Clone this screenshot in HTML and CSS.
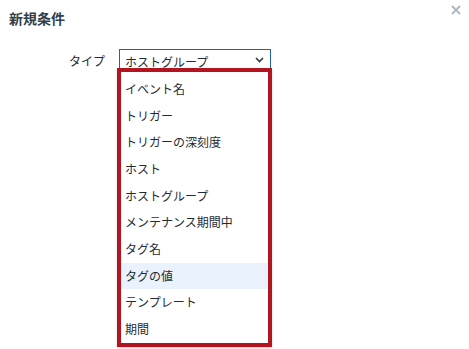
FILE: index.html
```html
<!doctype html>
<html>
	<head>
		<meta charset="utf-8" />
		<title>新規条件</title>
		<link rel="stylesheet" href="styles.css">
	</head>
	<body>
		<div class="dialog">
			<div class="dialog-head">
				<h4 class="dialog-title">新規条件</h4>
				<button class="dialog-close" title="閉じる">
					<svg width="10" height="10" viewBox="0 0 10 10"><path d="M1 1 L9 9 M9 1 L1 9" stroke="#aab7c1" stroke-width="1.8" fill="none"/></svg>
				</button>
			</div>
			<div class="form-row">
				<label class="form-label">タイプ</label>
				<div class="select-wrap">
					<div class="select">
						<span>ホストグループ</span>
						<svg class="chevron" width="9" height="6" viewBox="0 0 9 6"><path d="M1 1 L4.5 4.5 L8 1" stroke="#2f3a42" stroke-width="1.6" fill="none"/></svg>
					</div>
					<ul class="listbox">
						<li>イベント名</li>
						<li>トリガー</li>
						<li>トリガーの深刻度</li>
						<li>ホスト</li>
						<li>ホストグループ</li>
						<li>メンテナンス期間中</li>
						<li>タグ名</li>
						<li class="hover">タグの値</li>
						<li>テンプレート</li>
						<li>期間</li>
					</ul>
				</div>
			</div>
		</div>
	</body>
</html>
```

FILE: styles.css
```css
body {
	margin : 0;
	background : #ffffff;
	font-family : "Noto Sans CJK JP", "Noto Sans", sans-serif;
	color : #1f2c33;
}
.dialog {
	width : 469px;
	height : 349px;
	overflow : hidden;
}
.dialog-head {
	display : flex;
	justify-content : space-between;
	align-items : flex-start;
	padding : 9px 8px 0 9px;
	height : 40px;
	box-sizing : border-box;
}
.dialog-title {
	margin : 0;
	font-size : 14px;
	font-weight : bold;
	line-height : 18px;
	color : #333f48;
}
.dialog-close {
	border : none;
	background : none;
	padding : 0;
	margin : -4px 0 0 0;
	width : 10px;
	height : 10px;
	display : flex;
}
.form-row {
	display : flex;
	align-items : center;
	margin-top : 9px;
}
.form-label {
	width : 105px;
	text-align : right;
	font-size : 12px;
	color : #1f2c33;
	margin-right : 14px;
	margin-top : -3px;
}
.select-wrap {
	position : relative;
}
.select {
	width : 152px;
	height : 26px;
	box-sizing : border-box;
	border : 1px solid #1f65a6;
	display : flex;
	align-items : center;
	justify-content : space-between;
	padding : 0 6px 2px 5px;
	font-size : 12px;
	color : #1f2c33;
}
.chevron {
	margin-top : -3px;
}
.listbox {
	position : absolute;
	left : -2px;
	top : 19px;
	width : 155px;
	margin : 0;
	padding : 4px 0 0 0;
	list-style : none;
	box-sizing : border-box;
	border : 4px solid #b3141f;
	background : #ffffff;
	box-shadow : 0 2px 3px rgba(0, 0, 0, 0.15);
}
.listbox li {
	height : 26.67px;
	line-height : 26.67px;
	padding : 0 4px;
	font-size : 12px;
	color : #1f2c33;
	white-space : nowrap;
}
.listbox li.hover {
	background : #eaf3fd;
}
```
